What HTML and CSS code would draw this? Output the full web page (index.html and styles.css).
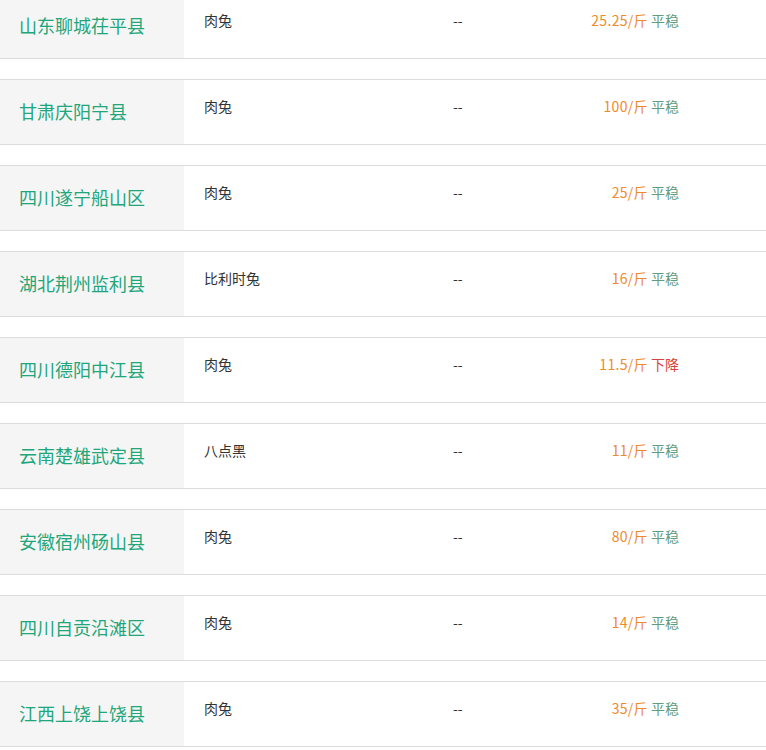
FILE: index.html
```html
<!DOCTYPE html>
<html lang="zh">
<head>
<meta charset="utf-8">
<link rel="stylesheet" href="styles.css">
</head>
<body>
<div class="list">
  <div class="row"><div class="area">山东聊城茌平县</div><div class="kind">肉兔</div><div class="dash">--</div><div class="price"><span class="num">25.25/斤</span> <span class="flat">平稳</span></div></div>
  <div class="row"><div class="area">甘肃庆阳宁县</div><div class="kind">肉兔</div><div class="dash">--</div><div class="price"><span class="num">100/斤</span> <span class="flat">平稳</span></div></div>
  <div class="row"><div class="area">四川遂宁船山区</div><div class="kind">肉兔</div><div class="dash">--</div><div class="price"><span class="num">25/斤</span> <span class="flat">平稳</span></div></div>
  <div class="row"><div class="area">湖北荆州监利县</div><div class="kind">比利时兔</div><div class="dash">--</div><div class="price"><span class="num">16/斤</span> <span class="flat">平稳</span></div></div>
  <div class="row"><div class="area">四川德阳中江县</div><div class="kind">肉兔</div><div class="dash">--</div><div class="price"><span class="num">11.5/斤</span> <span class="down">下降</span></div></div>
  <div class="row"><div class="area">云南楚雄武定县</div><div class="kind">八点黑</div><div class="dash">--</div><div class="price"><span class="num">11/斤</span> <span class="flat">平稳</span></div></div>
  <div class="row"><div class="area">安徽宿州砀山县</div><div class="kind">肉兔</div><div class="dash">--</div><div class="price"><span class="num">80/斤</span> <span class="flat">平稳</span></div></div>
  <div class="row"><div class="area">四川自贡沿滩区</div><div class="kind">肉兔</div><div class="dash">--</div><div class="price"><span class="num">14/斤</span> <span class="flat">平稳</span></div></div>
  <div class="row"><div class="area">江西上饶上饶县</div><div class="kind">肉兔</div><div class="dash">--</div><div class="price"><span class="num">35/斤</span> <span class="flat">平稳</span></div></div>
</div>
</body>
</html>
```
FILE: styles.css
```css
html, body {
  margin: 0;
  padding: 0;
  background: #fff;
}
body {
  font-family: "Noto Sans CJK SC", "Microsoft YaHei", sans-serif;
  color: #333;
  overflow: hidden;
}
.list {
  margin-top: -7px;
  display: flex;
  flex-direction: column;
  gap: 20px;
}
.row {
  display: grid;
  grid-template-columns: 184px 249px 1fr 240px;
  height: 64px;
  border-top: 1px solid #dcdcdc;
  border-bottom: 1px solid #dcdcdc;
}
.area {
  background: #f5f5f5;
  color: #1fa67b;
  font-size: 18px;
  line-height: 62px;
  padding-left: 19px;
  white-space: nowrap;
}
.kind, .dash, .price {
  font-size: 14px;
  line-height: 20px;
  padding-top: 16px;
  white-space: nowrap;
}
.kind {
  padding-left: 20px;
}
.dash {
  padding-left: 20px;
}
.price {
  text-align: right;
  padding-right: 87px;
}
.num {
  color: #ef8a2c;
  letter-spacing: 0.3px;
}
.flat {
  color: #629c80;
}
.down {
  color: #d5453d;
}
```
